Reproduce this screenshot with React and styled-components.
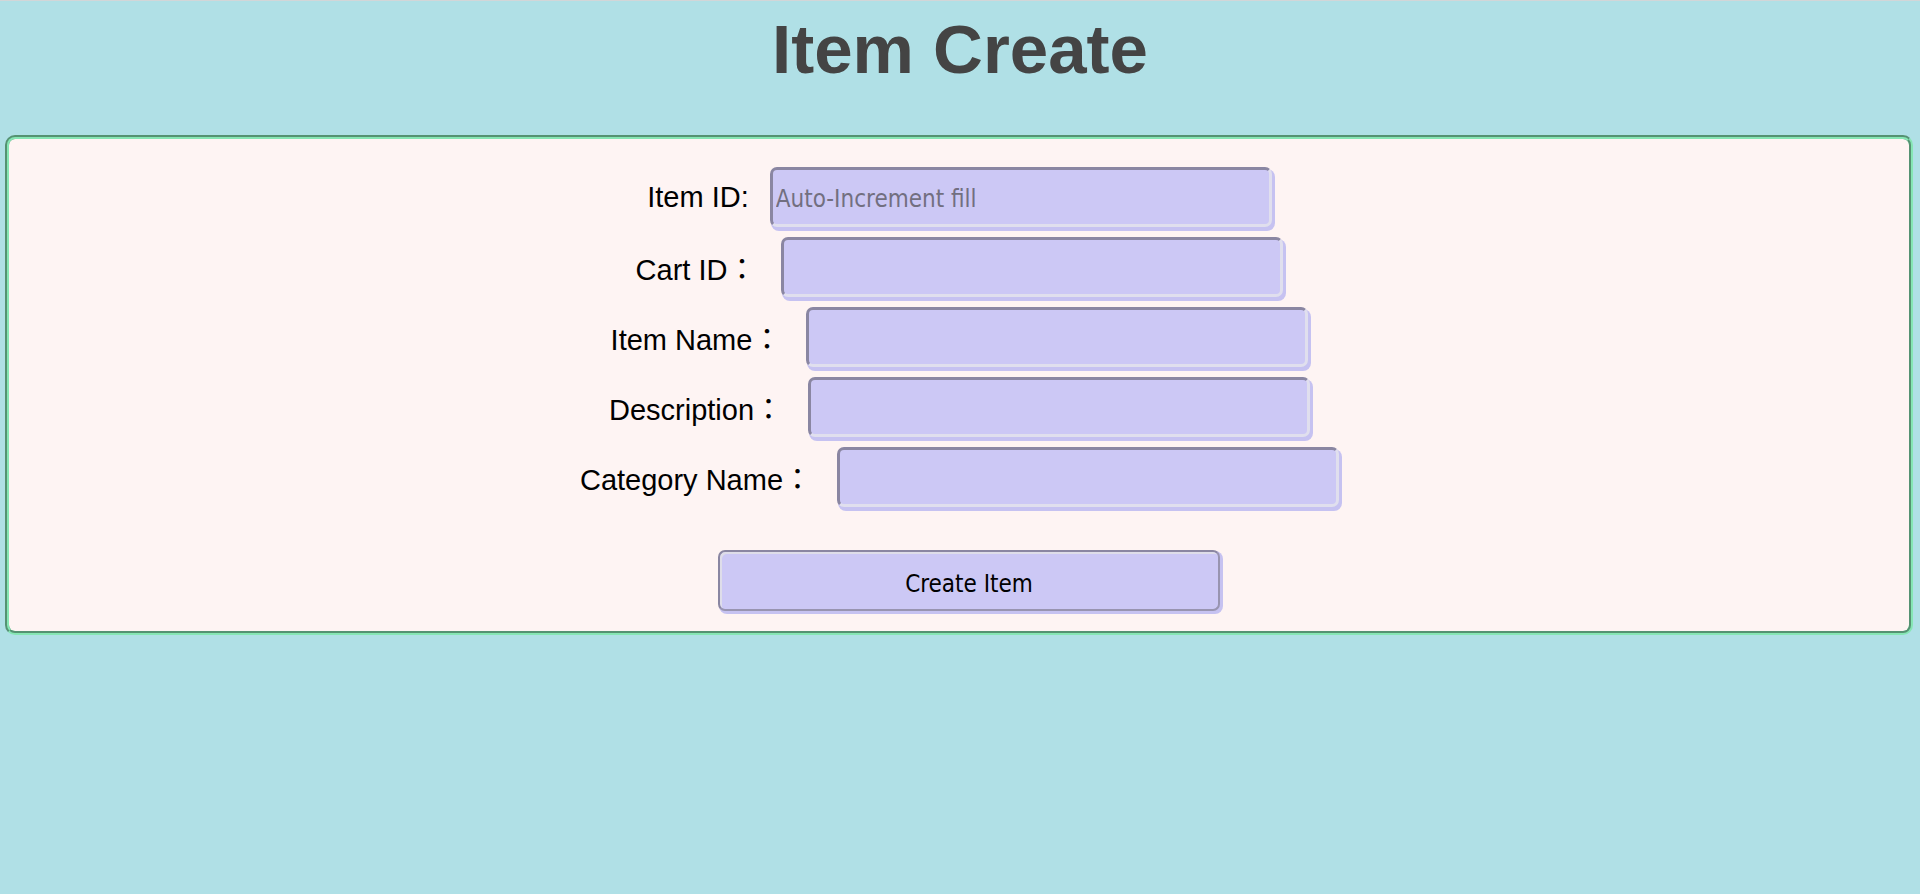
import React from "react";
import styled, { createGlobalStyle } from "styled-components";

const GlobalStyle = createGlobalStyle`
  html, body {
    margin: 0;
    padding: 0;
    background: #b0e0e6;
  }
  body {
    font-family: "Liberation Sans", Arial, sans-serif;
  }
`;

const Page = styled.div`
  border-top: 1px solid #d2d6d8;
  min-height: 893px;
`;

const Title = styled.h1`
  margin: 0;
  padding-top: 9px;
  font-family: "Liberation Sans", Arial, sans-serif;
  font-weight: 700;
  font-size: 69px;
  line-height: 80px;
  color: #444444;
  text-align: center;
`;

const Card = styled.form`
  margin: 45px 7px 0 5px;
  border: 4px groove #86e6b4;
  border-radius: 10px;
  background: #fef4f3;
  padding: 28px 0 20px 2px;
  display: flex;
  flex-direction: column;
  align-items: center;
  gap: 10px;
`;

const Row = styled.div`
  display: flex;
  align-items: center;
`;

const Label = styled.label`
  font-family: "Liberation Sans", Arial, "Noto Sans CJK JP", sans-serif;
  font-size: 29px;
  color: #000;
  margin-right: ${(p) => (p.$wide ? "25px" : "21px")};
  white-space: nowrap;
`;

const Input = styled.input`
  box-sizing: border-box;
  width: 502px;
  height: 60px;
  margin: 0 1px 0 0;
  padding: 4px 3px 0 3px;
  background: #ccc8f5;
  border-style: solid;
  border-width: 3px;
  border-color: #8a86a2 #e0dfee #e0dfee #8a86a2;
  border-radius: 7px;
  box-shadow: 2px 3px 0 1px #c6c2f1;
  font-family: "DejaVu Sans Condensed", "DejaVu Sans", sans-serif;
  font-stretch: condensed;
  font-size: 24px;
  color: #000;
  outline: none;

  &::placeholder {
    color: #726f80;
  }
`;

const Button = styled.button`
  box-sizing: border-box;
  width: 502px;
  height: 61px;
  margin: 33px 0 0 18px;
  padding: 6px 0 0 0;
  background: #ccc8f5;
  border-style: solid;
  border-width: 2px;
  border-color: #8a86a2 #9894b0 #9894b0 #8a86a2;
  border-radius: 7px;
  box-shadow: inset 2px 2px 0 #dedde9, 2px 2px 0 1px #c6c2f1;
  font-family: "DejaVu Sans Condensed", "DejaVu Sans", sans-serif;
  font-stretch: condensed;
  font-size: 24px;
  color: #000;
  cursor: pointer;
`;

const fields = [
  { id: "itemId", label: "Item ID:", placeholder: "Auto-Increment fill", wide: false },
  { id: "cartId", label: "Cart ID：", wide: true },
  { id: "itemName", label: "Item Name：", wide: true },
  { id: "description", label: "Description：", wide: true },
  { id: "categoryName", label: "Category Name：", wide: true },
];

export default function App() {
  return (
    <>
      <GlobalStyle />
      <Page>
        <Title>Item Create</Title>
        <Card onSubmit={(e) => e.preventDefault()}>
          {fields.map((f) => (
            <Row key={f.id}>
              <Label htmlFor={f.id} $wide={f.wide}>
                {f.label}
              </Label>
              <Input id={f.id} type="text" placeholder={f.placeholder || ""} />
            </Row>
          ))}
          <Button type="submit">Create Item</Button>
        </Card>
      </Page>
    </>
  );
}
